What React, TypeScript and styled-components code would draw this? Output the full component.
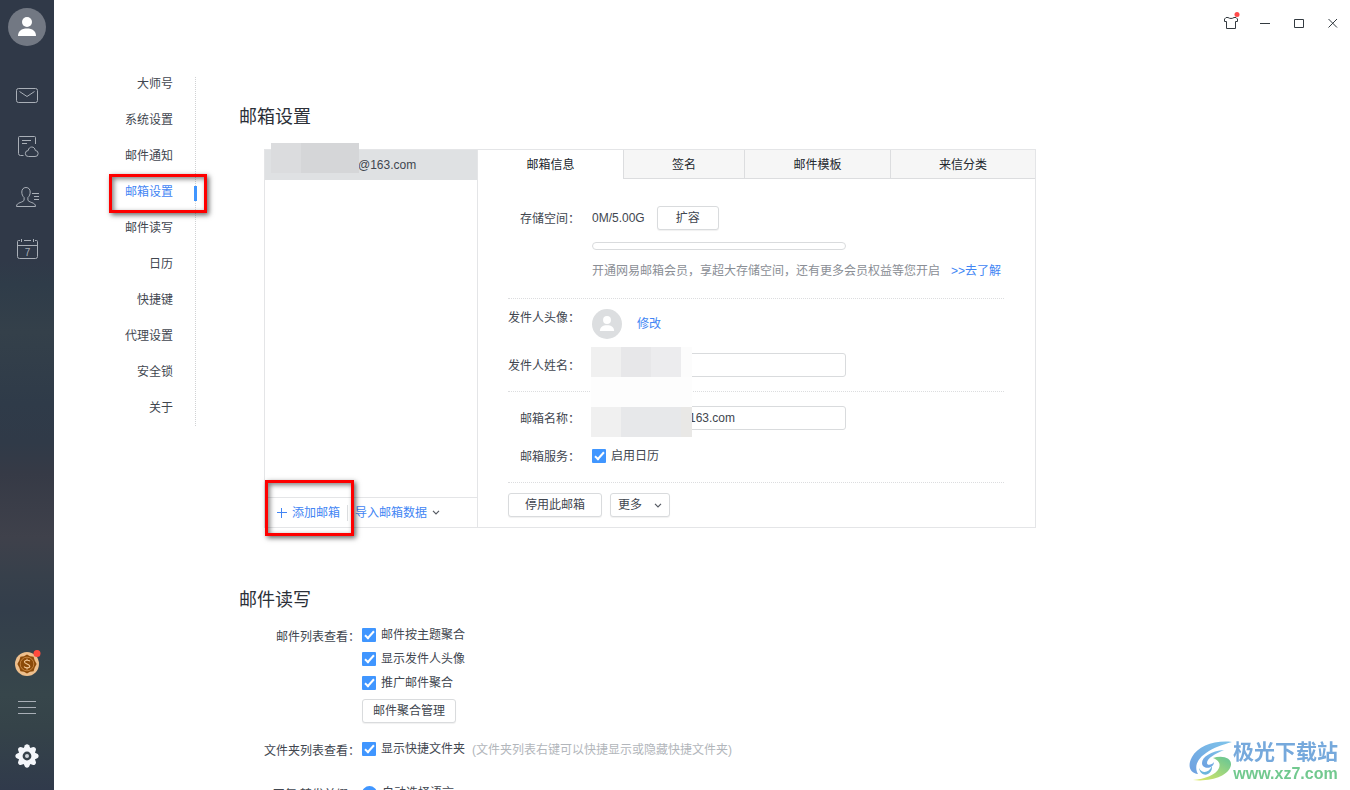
import React from 'react';
import styled, { createGlobalStyle } from 'styled-components';

const blue = '#4096ff';
const link = '#4285f4';
const line = '#e4e5e7';
const red = '#fe0000';

const GlobalStyle = createGlobalStyle`
  *, *::after { box-sizing: border-box; }
  body { margin: 0; background: #fff; }
  body, button, input, select {
    font-family: "Liberation Sans", "Noto Sans CJK SC", sans-serif;
    font-size: 12px;
    line-height: 18px;
    color: #41464f;
  }
  button { margin: 0; padding: 0; border: 0; background: none; }
  ul { list-style: none; margin: 0; padding: 0; }
  svg { display: block; }
`;

const Window = styled.div`
  display: flex;
  height: 100vh;
  overflow: hidden;
`;

const Sidebar = styled.aside`
  display: flex;
  flex: none;
  flex-direction: column;
  align-items: center;
  width: 54px;
  padding: 8px 0 22px;
  background: linear-gradient(#303948 0%, #303948 33%, #2f3c49 36%, #34404a 42%, #2f3b49 51%, #303a48 56%, #363a46 60%, #3f414b 68%, #37404b 73%, #333e4b 77%, #37464b 88%, #354349 92%, #303a4b 100%);
`;

const Avatar = styled.button`
  width: 38px;
  height: 38px;
`;

const SideNav = styled.nav<{ $gap: number }>`
  display: flex;
  flex-direction: column;
  gap: ${(p) => p.$gap}px;
`;

const MainNav = styled(SideNav)`
  margin: 38px 0 auto;
`;

const SideButton = styled.button<{ $spaced?: boolean }>`
  width: 24px;
  height: 24px;
  margin-bottom: ${(p) => (p.$spaced ? 4 : 0)}px;
  color: #a9afb7;
  svg { overflow: visible; }
`;

const Main = styled.main`
  display: flex;
  flex: 1;
  flex-direction: column;
  min-width: 0;
`;

const TitleBar = styled.header`
  display: flex;
  flex: none;
  justify-content: flex-end;
`;

const WindowButton = styled.button`
  display: grid;
  place-items: center;
  width: 34px;
  height: 46px;
`;

const Scroller = styled.div`
  display: flex;
  flex: 1;
  align-items: flex-start;
  min-height: 0;
  padding: 31px 24px 0 0;
  overflow: auto;
  scrollbar-width: none;
`;

const SettingsNav = styled.nav`
  flex: none;
  width: 142px;
  padding: 0 22px 11px 0;
  border-right: 1px dotted #d0d2d4;
  ul { display: grid; gap: 22px; }
`;

const NavItem = styled.li`
  position: relative;
  height: 14px;
  text-align: right;
`;

const NavLink = styled.a<{ $active?: boolean }>`
  display: block;
  line-height: 14px;
  text-decoration: none;
  color: ${(p) => (p.$active ? link : '#41464f')};
  &::after {
    content: "";
    display: ${(p) => (p.$active ? 'block' : 'none')};
    position: absolute;
    top: 1px;
    right: -24px;
    width: 3px;
    height: 15px;
    background: ${blue};
  }
`;

const Highlight = styled.span<{ $inset: string }>`
  position: absolute;
  inset: ${(p) => p.$inset};
  z-index: 2;
  border: 3px solid ${red};
  box-shadow: 2px 2px 5px rgba(0, 0, 0, 0.6), inset 2px 2px 5px rgba(0, 0, 0, 0.5);
  pointer-events: none;
`;

const Content = styled.div`
  flex: 1;
  min-width: 0;
  padding: 27px 0 20px 43px;
`;

const Heading = styled.h2`
  margin: 0;
  font-size: 18px;
  font-weight: 400;
  line-height: 26px;
  color: #2c3038;
`;

const Panel = styled.section`
  display: grid;
  grid-template-columns: 213px minmax(0, 1fr);
  max-width: 772px;
  margin: 19px 0 59px 25px;
  border: 1px solid ${line};
`;

const Accounts = styled.div`
  display: flex;
  flex-direction: column;
  border-right: 1px solid ${line};
`;

const Account = styled.button`
  position: relative;
  height: 30px;
  padding-left: 93px;
  text-align: left;
  background: #dfe1e3;
`;

const Mosaic = styled.span<{ $left: number; $top: number; $columns: string }>`
  position: absolute;
  left: ${(p) => p.$left}px;
  top: ${(p) => p.$top}px;
  z-index: 1;
  display: grid;
  grid-template-columns: ${(p) => p.$columns};
  grid-auto-rows: 30px;
`;

const Tile = styled.i<{ $tone: string }>`
  background: ${(p) => p.$tone};
`;

const AccountActions = styled.div`
  position: relative;
  display: flex;
  align-items: center;
  height: 30px;
  margin-top: auto;
  padding-left: 12px;
  border-top: 1px solid ${line};
`;

const TextButton = styled.button`
  display: flex;
  align-items: center;
  gap: 5px;
  color: ${link};
`;

const Divider = styled.span`
  width: 1px;
  height: 16px;
  margin: 0 7px;
  background: #dcdee0;
`;

const Tabs = styled.div`
  display: grid;
  grid-template-columns: 145fr 121fr 146fr 145fr;
  height: 29px;
`;

const Tab = styled.button<{ $active?: boolean }>`
  padding-top: ${(p) => (p.$active ? 0 : 1)}px;
  color: #22262d;
  background: ${(p) => (p.$active ? '#fff' : '#f6f6f6')};
  border-left: ${(p) => (p.$active ? '0' : '1px solid #dcdddf')};
  border-bottom: ${(p) => (p.$active ? '0' : '1px solid #dcdddf')};
`;

const TabBody = styled.div`
  position: relative;
  padding: 17px 31px 0 30px;
`;

const Group = styled.div<{ $gap?: number; $bottom: number; $last?: boolean }>`
  display: grid;
  gap: ${(p) => p.$gap ?? 14}px;
  padding: 10px 0 ${(p) => p.$bottom}px;
  border-bottom: ${(p) => (p.$last ? '0' : '1px dotted #dcdddf')};
`;

const NameGroup = styled(Group)`
  padding-top: 14px;
`;

const FieldLabel = styled.label`
  padding-top: 2px;
  text-align: right;
  white-space: nowrap;
`;

const Field = styled.div<{ $top?: boolean }>`
  display: grid;
  grid-template-columns: 72px minmax(0, 1fr);
  column-gap: 12px;
  align-items: ${(p) => (p.$top ? 'start' : 'center')};
  ${FieldLabel} { padding-top: ${(p) => (p.$top ? 0 : 2)}px; }
`;

const Inline = styled.div<{ $gap: number }>`
  display: flex;
  align-items: center;
  gap: ${(p) => p.$gap}px;
`;

const Button = styled.button<{ $width: number }>`
  width: ${(p) => p.$width}px;
  height: 24px;
  border: 1px solid #d9dbdd;
  border-radius: 3px;
  background: #fff;
  box-shadow: 0 1px 1px rgba(0, 0, 0, 0.06);
`;

const Meter = styled.div`
  max-width: 254px;
  height: 8px;
  margin-left: 84px;
  border: 1px solid #d9dbdd;
  border-radius: 4px;
`;

const Note = styled.p`
  display: flex;
  gap: 11px;
  margin: 0 0 0 84px;
  color: #8a8e95;
  white-space: nowrap;
`;

const Anchor = styled.a`
  color: ${link};
  text-decoration: none;
`;

const TextInput = styled.input`
  width: 100%;
  max-width: 254px;
  height: 24px;
  padding: 0 8px 0 96px;
  border: 1px solid #d9dbdd;
  border-radius: 3px;
  outline: none;
`;

const Option = styled.label`
  display: flex;
  align-items: center;
  gap: 5px;
  height: 24px;
`;

const Check = styled.input`
  position: relative;
  flex: none;
  appearance: none;
  width: 14px;
  height: 14px;
  margin: 0;
  border-radius: 1px;
  background: ${blue};
  &::after {
    content: "";
    position: absolute;
    top: 1px;
    left: 5px;
    width: 5px;
    height: 10px;
    border: solid #fff;
    border-width: 0 2px 2px 0;
    transform: rotate(42deg);
  }
`;

const Radio = styled.input`
  appearance: none;
  width: 15px;
  height: 15px;
  margin: 0;
  border: 5px solid ${blue};
  border-radius: 50%;
`;

const SelectBox = styled.div`
  position: relative;
  svg { position: absolute; right: 8px; top: 10px; pointer-events: none; }
`;

const Select = styled.select`
  appearance: none;
  display: block;
  width: 60px;
  height: 24px;
  padding: 0 7px;
  border: 1px solid #d9dbdd;
  border-radius: 3px;
  background: #fff;
  box-shadow: 0 1px 1px rgba(0, 0, 0, 0.06);
`;

const Rows = styled.div`
  display: grid;
  grid-template-columns: 121px minmax(0, 1fr);
  column-gap: 2px;
  margin-top: 10px;
`;

const RowLabel = styled.span`
  padding-top: 5px;
  text-align: right;
  white-space: nowrap;
`;

const Options = styled.div<{ $bottom: number }>`
  padding-bottom: ${(p) => p.$bottom}px;
`;

const ManageButton = styled(Button)`
  display: block;
  margin-top: 4px;
`;

const Hint = styled.span`
  padding-top: 2px;
  color: #b2b6bb;
`;

const Watermark = styled.div`
  position: fixed;
  right: 12px;
  bottom: 6px;
  display: flex;
  align-items: center;
`;

const BrandText = styled.div`
  display: grid;
  justify-items: center;
`;

const BrandName = styled.strong`
  font-size: 21px;
  line-height: 25px;
  color: #76a9dc;
`;

const BrandUrl = styled.span`
  font-size: 16px;
  font-weight: 700;
  line-height: 20px;
  color: #72c98f;
`;

const PersonIcon = ({ size, disc }: { size: number; disc: string }) => (
  <svg width={size} height={size} viewBox="0 0 38 38">
    <circle cx="19" cy="19" r="19" fill={disc} />
    <circle cx="19" cy="14" r="5" fill="#fff" />
    <path d="M10 28c0-5 3.500-7.500 9-7.500s9 2.500 9 7.500z" fill="#fff" />
  </svg>
);

const Chevron = ({ color = '#555a62' }: { color?: string }) => (
  <svg width="8" height="5" viewBox="0 0 8 5" fill="none" stroke={color} strokeWidth="1.200">
    <path d="M1 .8 4 3.800 7 .8" />
  </svg>
);

const SideIcon = ({ children }: { children: React.ReactNode }) => (
  <svg width="24" height="24" viewBox="0 0 24 24" fill="none" stroke="currentColor" strokeWidth="1">
    {children}
  </svg>
);

const MailIcon = () => (
  <SideIcon>
    <rect x="1.500" y="4.500" width="21" height="14" rx="2" />
    <path d="m4.500 7.500 7.500 5 7.500-5" />
  </SideIcon>
);

const NoteIcon = () => (
  <SideIcon>
    <g transform="translate(0 -1)">
      <path d="M8.500 21.500h-3a2 2 0 0 1-2-2v-16a1 1 0 0 1 1-1h15a1 1 0 0 1 1 1V10M7 6.500h9M7 9.500h5" />
      <path d="M13.500 22.500a3 3 0 0 1-.3-6c.3-2.200 1.800-3.500 3.600-3.500s3.200 1.300 3.500 3.500a3 3 0 0 1-.3 6z" />
    </g>
  </SideIcon>
);

const ContactIcon = () => (
  <SideIcon>
    <g transform="translate(0 -1)">
      <path d="M11 2.500c-2.800 0-4.200 2-4.200 4.500 0 2.300.8 4.200 2.300 5.500v2.500c0 1-1.800 1.800-4 2.600-2 .8-3.600 1.400-3.600 3.900h19c0-2.500-1.600-3.100-3.600-3.900-2.200-.8-4-1.600-4-2.600v-2.500c1.500-1.300 2.300-3.200 2.300-5.500 0-2.500-1.400-4.500-4.200-4.500z" />
      <path d="M17 8.500h7M19 11.500h5M19 14.500h5" />
    </g>
  </SideIcon>
);

const CalendarIcon = () => (
  <SideIcon>
    <path d="M5 3.500H3.500a1 1 0 0 0-1 1v15a2 2 0 0 0 2 2h16a2 2 0 0 0 2-2v-15a1 1 0 0 0-1-1H20M9 3.500h7M2.500 8.500h20M6.500 2v3M18.500 2v3" />
    <text x="12.500" y="19" fontSize="10" textAnchor="middle" fill="currentColor" stroke="none">7</text>
  </SideIcon>
);

const CoinIcon = () => (
  <svg width="24" height="24" viewBox="0 0 24 24">
    <circle cx="12" cy="12" r="12" fill="#eebf8c" />
    <path d="m12 2.500 3 1.700 3.600.5 1 3.500 2 3.800-2 3.800-1 3.500-3.600.5-3 1.700-3-1.700-3.600-.5-1-3.500-2-3.800 2-3.800 1-3.500 3.600-.5z" fill="#8c4a08" />
    <circle cx="12" cy="12" r="6.800" fill="none" stroke="#cf8f4c" strokeWidth=".8" />
    <path d="M14.800 9.300c-.6-1.500-5.300-1.500-5.300.7 0 2 5.300 1.900 5.300 4.200 0 2.200-5 2.100-5.600.3M12 6.800v1.600M12 15.800v1.600" fill="none" stroke="#f3c999" strokeWidth="1.100" />
    <circle cx="22" cy="1.500" r="3.500" fill="#ff4a3d" />
  </svg>
);

const MenuIcon = () => (
  <SideIcon>
    <path d="M3 5.500h18M3 11.500h18M3 17.500h18" />
  </SideIcon>
);

const teeth = [0, 45, 90, 135, 180, 225, 270, 315];

const GearIcon = () => (
  <svg width="24" height="24" viewBox="0 0 24 24">
    {teeth.map((angle) => (
      <path key={angle} d="M8 5.500 10 1.300Q12-.6 14 1.300L16 5.500z" fill="#f4f6fa" transform={`rotate(${angle} 12 12)`} />
    ))}
    <circle cx="12" cy="12" r="8.500" fill="#f4f6fa" />
    <circle cx="12" cy="12" r="3.200" fill="#cfd4da" stroke="#364149" strokeWidth="2.400" />
  </svg>
);

const ShirtIcon = () => (
  <svg width="18" height="22" viewBox="0 0 18 22" fill="none" stroke="#333a40" strokeWidth="1">
    <path d="M6 5.500c1.500 1.300 4.500 1.300 6 0h2l1.500 1.500v2.500H13.500v7h-9v-7H2.500V7L4 5.500z" />
    <circle cx="15" cy="2.500" r="2.500" fill="#ff4a4a" stroke="none" />
  </svg>
);

const SwirlLogo = () => (
  <svg width="44" height="42" viewBox="0 0 44 42">
    <defs>
      <linearGradient id="swirl-sky" x1="0" y1="1" x2="1" y2="0">
        <stop offset="0" stopColor="#6d9fe0" />
        <stop offset="1" stopColor="#7fc4ea" />
      </linearGradient>
      <linearGradient id="swirl-leaf" x1="0" y1="1" x2="1" y2="0">
        <stop offset="0" stopColor="#e3ea62" />
        <stop offset="1" stopColor="#62c497" />
      </linearGradient>
    </defs>
    <path d="M43 1C26-1 9 5 3 16c-5 9-2 16 6 17C5 26 8 18 17 12 25 6 33 4 43 1z" fill="url(#swirl-sky)" />
    <path d="M35 9C22 10 13 16 13 22c0 7 12 6 12-1-2 3-7 4-7 1 0-5 8-9 17-13z" fill="url(#swirl-sky)" />
    <path d="M24 17c8-3 19-1 18 7-2 11-20 17-38 15 12-1 23-5 26-12 2-5-1-8-6-10z" fill="url(#swirl-leaf)" />
    <path d="M10 27c3 6 10 5 13-2 1 9-11 13-13 2z" fill="#6bb6dc" />
  </svg>
);

const navItems = ['大师号', '系统设置', '邮件通知', '邮箱设置', '邮件读写', '日历', '快捷键', '代理设置', '安全锁', '关于'];
const tabs = ['邮箱信息', '签名', '邮件模板', '来信分类'];
const listOptions = ['邮件按主题聚合', '显示发件人头像', '推广邮件聚合'];
const activeItem = '邮箱设置';
const hiddenTones = ['#f0f0f0', '#e7e7e9', '#ececee', '#fcfcfc', '#fdfdfd', '#fdfdfd', '#fdfdfd', '#fdfdfd', '#f0f0f0', '#e7e8ea', '#e7e8ea', '#e9e8e6'];

export default function App() {
  return (
    <Window>
      <GlobalStyle />
      <Sidebar>
        <Avatar aria-label="账号"><PersonIcon size={38} disc="#727883" /></Avatar>
        <MainNav $gap={27} aria-label="主导航">
          <SideButton aria-label="邮件"><MailIcon /></SideButton>
          <SideButton aria-label="文档"><NoteIcon /></SideButton>
          <SideButton aria-label="联系人"><ContactIcon /></SideButton>
          <SideButton aria-label="日历"><CalendarIcon /></SideButton>
        </MainNav>
        <SideNav $gap={20} aria-label="工具">
          <SideButton aria-label="金币"><CoinIcon /></SideButton>
          <SideButton aria-label="菜单" $spaced><MenuIcon /></SideButton>
          <SideButton aria-label="设置"><GearIcon /></SideButton>
        </SideNav>
      </Sidebar>
      <Main>
        <TitleBar>
          <WindowButton aria-label="皮肤"><ShirtIcon /></WindowButton>
          <WindowButton aria-label="最小化">
            <svg width="10" height="10" viewBox="0 0 10 10" stroke="#333a40"><path d="M0 5.500h10" /></svg>
          </WindowButton>
          <WindowButton aria-label="最大化">
            <svg width="10" height="10" viewBox="0 0 10 10" fill="none" stroke="#333a40"><path d="M.5 1.500h9v8h-9z" /></svg>
          </WindowButton>
          <WindowButton aria-label="关闭">
            <svg width="10" height="10" viewBox="0 0 10 10" stroke="#333a40"><path d="m.5 1 8.500 8.500m0-8.500L.5 9.500" /></svg>
          </WindowButton>
        </TitleBar>
        <Scroller>
          <SettingsNav aria-label="设置">
            <ul>
              {navItems.map((name) => (
                <NavItem key={name}>
                  <NavLink href="#" $active={name === activeItem}>{name}</NavLink>
                  {name === activeItem && <Highlight $inset="-11px -34px -14px 55px" />}
                </NavItem>
              ))}
            </ul>
          </SettingsNav>
          <Content>
            <Heading>邮箱设置</Heading>
            <Panel>
              <Accounts>
                <Account>
                  @163.com
                  <Mosaic $left={6} $top={-7} $columns="30px 58px">
                    <Tile $tone="#dbdcde" />
                    <Tile $tone="#d5d6d8" />
                  </Mosaic>
                </Account>
                <AccountActions>
                  <TextButton>
                    <svg width="10" height="10" viewBox="0 0 10 10" stroke="currentColor"><path d="M0 4.500h10M4.500 0v10" /></svg>
                    添加邮箱
                  </TextButton>
                  <Divider />
                  <TextButton aria-haspopup="menu">
                    导入邮箱数据
                    <Chevron />
                  </TextButton>
                  <Highlight $inset="-18px 123px -9px 0" />
                </AccountActions>
              </Accounts>
              <div>
                <Tabs role="tablist">
                  {tabs.map((name, i) => (
                    <Tab key={name} role="tab" aria-selected={i === 0} $active={i === 0}>{name}</Tab>
                  ))}
                </Tabs>
                <TabBody role="tabpanel">
                  <Group $gap={12} $bottom={18}>
                    <Field>
                      <FieldLabel as="span">存储空间：</FieldLabel>
                      <Inline $gap={12}>
                        <span>0M/5.00G</span>
                        <Button $width={62}>扩容</Button>
                      </Inline>
                    </Field>
                    <Meter role="progressbar" aria-label="存储空间" aria-valuenow={0} />
                    <Note>
                      <span>开通网易邮箱会员，享超大存储空间，还有更多会员权益等您开启</span>
                      <Anchor href="#">&gt;&gt;去了解</Anchor>
                    </Note>
                  </Group>
                  <Group $bottom={14}>
                    <Field $top>
                      <FieldLabel as="span">发件人头像：</FieldLabel>
                      <Inline $gap={15}>
                        <PersonIcon size={30} disc="#dcdee0" />
                        <Anchor href="#">修改</Anchor>
                      </Inline>
                    </Field>
                    <Field>
                      <FieldLabel htmlFor="sender">发件人姓名：</FieldLabel>
                      <TextInput id="sender" type="text" />
                    </Field>
                  </Group>
                  <NameGroup $bottom={14}>
                    <Field>
                      <FieldLabel htmlFor="mailbox">邮箱名称：</FieldLabel>
                      <TextInput id="mailbox" type="text" defaultValue="163.com" />
                    </Field>
                    <Field>
                      <FieldLabel as="span">邮箱服务：</FieldLabel>
                      <Option><Check type="checkbox" defaultChecked />启用日历</Option>
                    </Field>
                  </NameGroup>
                  <Group $bottom={10} $last>
                    <Inline $gap={8}>
                      <Button $width={94}>停用此邮箱</Button>
                      <SelectBox>
                        <Select aria-label="更多"><option>更多</option></Select>
                        <Chevron />
                      </SelectBox>
                    </Inline>
                  </Group>
                  <Mosaic $left={113} $top={168} $columns="30px 30px 30px 11px">
                    {hiddenTones.map((tone, i) => <Tile key={i} $tone={tone} />)}
                  </Mosaic>
                </TabBody>
              </div>
            </Panel>
            <Heading>邮件读写</Heading>
            <Rows>
              <RowLabel>邮件列表查看：</RowLabel>
              <Options $bottom={14}>
                {listOptions.map((name) => (
                  <Option key={name}><Check type="checkbox" defaultChecked />{name}</Option>
                ))}
                <ManageButton $width={94}>邮件聚合管理</ManageButton>
              </Options>
              <RowLabel>文件夹列表查看：</RowLabel>
              <Options $bottom={20}>
                <Inline $gap={7}>
                  <Option><Check type="checkbox" defaultChecked />显示快捷文件夹</Option>
                  <Hint>(文件夹列表右键可以快捷显示或隐藏快捷文件夹)</Hint>
                </Inline>
              </Options>
              <RowLabel>回复/转发前缀：</RowLabel>
              <Options $bottom={20}>
                <Option><Radio type="radio" name="prefix" defaultChecked />自动选择语言</Option>
              </Options>
            </Rows>
          </Content>
        </Scroller>
      </Main>
      <Watermark>
        <SwirlLogo />
        <BrandText>
          <BrandName>极光下载站</BrandName>
          <BrandUrl>www.xz7.com</BrandUrl>
        </BrandText>
      </Watermark>
    </Window>
  );
}
